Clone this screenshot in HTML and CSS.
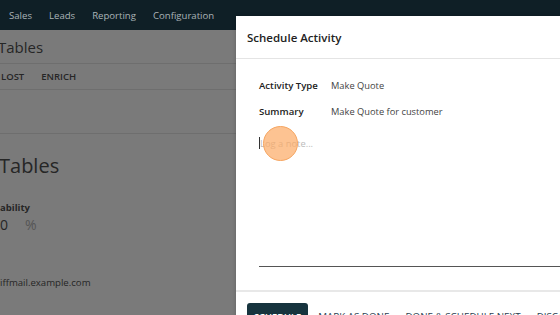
FILE: index.html
```html
<!DOCTYPE html>
<html>
<head>
<meta charset="utf-8">
<link rel="stylesheet" href="styles.css">
</head>
<body>
<div class="app">
  <nav class="navbar">
    <span>Sales</span><span>Leads</span><span>Reporting</span><span>Configuration</span>
  </nav>
  <div class="page">
    <div class="crumb">Tables</div>
    <div class="actions"><span>LOST</span><span>ENRICH</span></div>
    <div class="sheet">
      <div class="title">Tables</div>
      <div class="prob-label">ability</div>
      <div class="prob"><span>0</span><span class="pct">%</span></div>
      <div class="mail">iffmail.example.com</div>
    </div>
  </div>
</div>
<div class="modal">
  <div class="modal-header">Schedule Activity</div>
  <div class="modal-body">
    <div class="row"><span class="lbl">Activity Type</span><span class="val">Make Quote</span></div>
    <div class="row"><span class="lbl">Summary</span><span class="val">Make Quote for customer</span></div>
    <div class="note"><span class="caret"></span><span class="ph">Log a note...</span></div>
  </div>
  <div class="modal-footer">
    <button class="btn primary">SCHEDULE</button>
    <button class="btn">MARK AS DONE</button>
    <button class="btn">DONE &amp; SCHEDULE NEXT</button>
    <button class="btn">DISCARD</button>
  </div>
</div>
<div class="click"></div>
</body>
</html>
```
FILE: styles.css
```css
* { box-sizing: border-box; }
html, body { margin: 0; padding: 0; }
body {
  width: 560px; height: 315px; overflow: hidden; position: relative;
  font-family: "Open Sans", "Noto Sans", sans-serif;
  background: #7a7a7a;
}
.app { width: 560px; height: 315px; }
.navbar {
  height: 30px; background: #0f1f26; display: flex; align-items: center;
  padding-left: 9px; gap: 17px; font-size: 9.6px; color: #aab3b7;
}
.page { color: #262626; }
.crumb { height: 34px; font-size: 15px; padding-top: 7px; border-bottom: 1px solid #6e6e6e; margin-left: -2px; }
.actions { height: 26px; display: flex; gap: 17px; align-items: center; font-size: 9.5px; font-weight: 600; border-bottom: 1px solid #6e6e6e; padding-left: 1px; }
.sheet { margin-top: 43px; border-top: 1px solid #6e6e6e; padding-top: 19px; }
.title { font-size: 20px; line-height: 26px; margin-left: -1px; }
.prob-label { margin-top: 22px; font-size: 9.5px; font-weight: 700; }
.prob { font-size: 14px; display: flex; gap: 17px; margin-top: 1px; }
.pct { color: #555; }
.mail { margin-top: 42px; font-size: 9.6px; }
.modal {
  position: absolute; left: 236px; top: 16px; width: 340px; height: 320px;
  background: #fff; box-shadow: 0 0 4px rgba(0,0,0,0.2);
  display: flex; flex-direction: column;
}
.modal-header { height: 43px; padding: 14px 0 0 11px; font-size: 11.5px; font-weight: 600; color: #222; border-bottom: 1px solid #e4e4e4; flex: none; }
.modal-body { height: 231px; padding: 20px 0 0 23px; font-size: 9.6px; color: #333; flex: none; }
.row { display: flex; height: 26px; }
.lbl { width: 72px; font-weight: 600; color: #222; }
.val { color: #444; font-size: 9.3px; }
.note { height: 138px; margin-top: -2px; border-bottom: 1px solid #555; display: flex; align-items: flex-start; padding-top: 8px; }
.caret { width: 1px; height: 12px; background: #333; }
.ph { color: #bbb; font-size: 9.4px; }
.modal-footer { border-top: 2px solid #e8e8e8; padding: 11px 0 0 11px; display: flex; align-items: flex-start; flex: none; }
.btn { font-family: inherit; font-size: 9.8px; border: none; background: none; color: #2c3e50; padding: 5px 8px 4px; height: 26px; border-radius: 3px; white-space: nowrap; line-height: 12px; }
.btn.primary { background: #17343e; color: #fff; font-weight: 600; font-size: 9.3px; padding: 5px 7px 4px; margin-right: 2px; }
.click {
  position: absolute; left: 263px; top: 126px; width: 35px; height: 35px; border-radius: 50%;
  background: rgba(252,170,100,0.7); border: 1px solid #f6a560;
}
```
